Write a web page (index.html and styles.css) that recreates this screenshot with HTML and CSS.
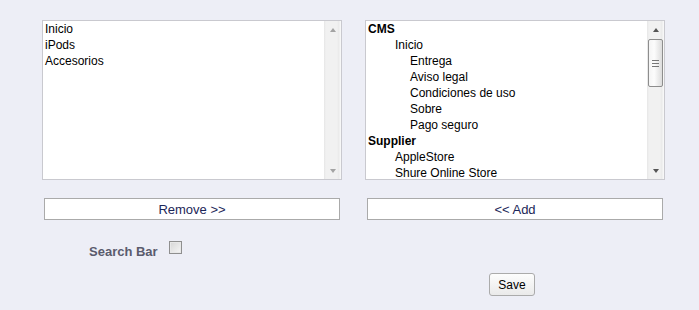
FILE: index.html
```html
<!DOCTYPE html>
<html>
<head>
  <meta charset='utf-8'>
  <title>Menu blocks</title>
  <meta name='viewport' content='width=device-width, initial-scale=1'>
  <link rel="stylesheet" href="styles.css">
</head>
<body>
  <div class="columns">
    <div class="listbox">
      <ul class="items">
        <li>Inicio</li>
        <li>iPods</li>
        <li>Accesorios</li>
      </ul>
      <div class="scrollbar disabled">
        <span class="arrow up"></span>
        <span class="track"></span>
        <span class="arrow down"></span>
      </div>
    </div>
    <div class="listbox">
      <ul class="items">
        <li class="group">CMS</li>
        <li class="lvl1">Inicio</li>
        <li class="lvl2">Entrega</li>
        <li class="lvl2">Aviso legal</li>
        <li class="lvl2">Condiciones de uso</li>
        <li class="lvl2">Sobre</li>
        <li class="lvl2">Pago seguro</li>
        <li class="group">Supplier</li>
        <li class="lvl1">AppleStore</li>
        <li class="lvl1">Shure Online Store</li>
      </ul>
      <div class="scrollbar">
        <span class="arrow up"></span>
        <span class="track"><span class="thumb"><i></i><i></i><i></i></span></span>
        <span class="arrow down"></span>
      </div>
    </div>
    <button class="wide">Remove &gt;&gt;</button>
    <button class="wide">&lt;&lt; Add</button>
  </div>
  <div class="option">
    <label for="search">Search Bar</label>
    <input type="checkbox" id="search">
  </div>
  <div class="submit">
    <button class="save">Save</button>
  </div>
</body>
</html>
```

FILE: styles.css
```css
*, *:before, *:after {
  box-sizing: border-box;
}
html, body {
  background: #edeef6;
  font-family: "Liberation Sans", Arial, sans-serif;
  font-size: 12px;
  margin: 0;
  padding: 0;
}
body {
  padding: 20px 0 0 42px;
}
.columns {
  display: grid;
  grid-template-columns: 300px 300px;
  column-gap: 23px;
  row-gap: 18px;
}
.listbox {
  display: flex;
  height: 160px;
  background: #fff;
  border: 1px solid #c9c9cf;
}
.items {
  flex: 1;
  list-style: none;
  margin: 0;
  padding: 0 0 0 2px;
  overflow: hidden;
  line-height: 16px;
  color: #000;
}
.items li {
  white-space: nowrap;
}
.items .group {
  font-weight: bold;
}
.items .lvl1 {
  padding-left: 27px;
}
.items .lvl2 {
  padding-left: 42px;
}
.scrollbar {
  width: 17px;
  display: flex;
  flex-direction: column;
  background: linear-gradient(to right, #e6e6e6 0, #f1f1f1 2px, #f1f1f1 13px, #e9e9e9 15px, #f7f7f7 16px);
}
.arrow {
  height: 17px;
  display: flex;
  align-items: center;
  justify-content: center;
}
.arrow:after {
  content: "";
  border-left: 3px solid transparent;
  border-right: 3px solid transparent;
}
.arrow.up:after {
  border-bottom: 4px solid #555;
}
.arrow.down:after {
  border-top: 4px solid #555;
}
.scrollbar.disabled .arrow.up:after {
  border-bottom-color: #a3a3a3;
}
.scrollbar.disabled .arrow.down:after {
  border-top-color: #a3a3a3;
}
.track {
  flex: 1;
  padding: 1px 1px 0 1px;
}
.thumb {
  display: flex;
  flex-direction: column;
  align-items: center;
  justify-content: center;
  gap: 2px;
  height: 48px;
  border: 1px solid #8d8d8d;
  border-radius: 2px;
  background: linear-gradient(to right, #f4f4f4, #fcfcfc 40%, #dcdcdc);
}
.thumb i {
  display: block;
  width: 7px;
  height: 1px;
  background: #777;
}
button.wide {
  margin: 0 2px;
  height: 22px;
  background: #fff;
  border: 1px solid #aaa;
  color: #1c2658;
  font-family: "Liberation Sans", Arial, sans-serif;
  font-size: 13px;
  padding: 0;
}
.option {
  display: flex;
  align-items: flex-start;
  margin-top: 21px;
  padding-left: 47px;
}
.option label {
  padding-top: 3px;
  line-height: 16px;
  font-size: 13px;
  font-weight: bold;
  color: #5a5b6d;
}
.option input {
  appearance: none;
  -webkit-appearance: none;
  margin: 0 0 0 11px;
  width: 13px;
  height: 13px;
  border: 1px solid #8f8f8f;
  background: linear-gradient(135deg, #d6d6d6, #f6f6f6);
  box-shadow: inset 0 0 0 1px #e8e8e8;
}
.submit {
  margin-top: 13px;
  padding-left: 447px;
}
.save {
  width: 46px;
  height: 23px;
  padding: 0;
  border: 1px solid #ababab;
  border-radius: 3px;
  background: linear-gradient(#fdfdfd, #eaeaea);
  font-family: "Liberation Sans", Arial, sans-serif;
  font-size: 12px;
  color: #000;
}
```
